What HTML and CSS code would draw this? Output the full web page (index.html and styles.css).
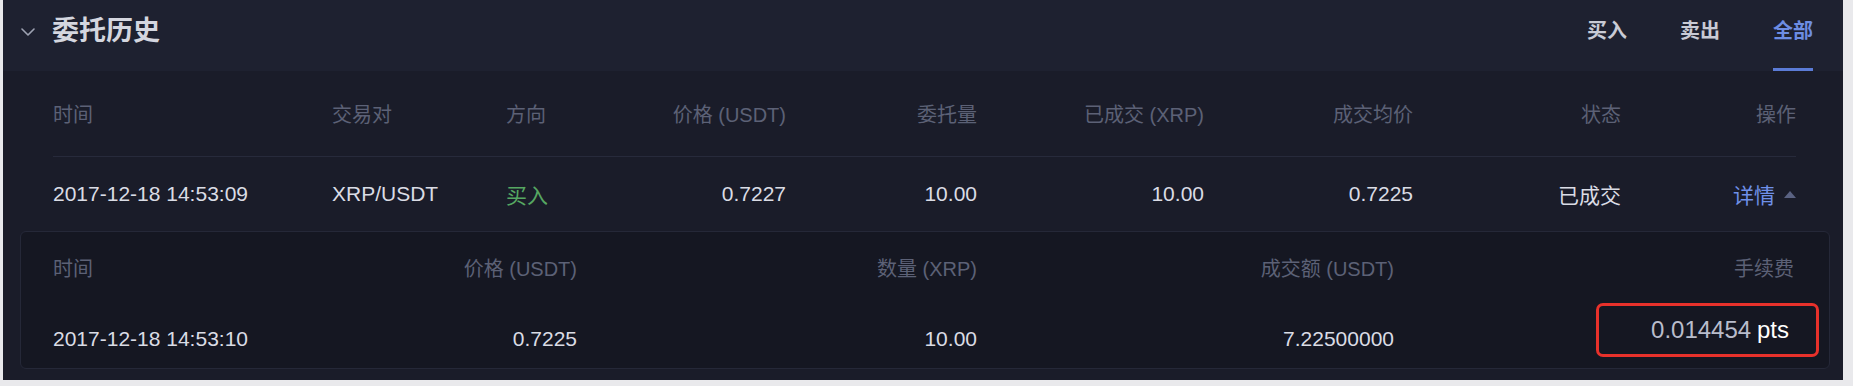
FILE: index.html
```html
<!DOCTYPE html>
<html lang="zh-CN">
<head>
<meta charset="utf-8">
<title>委托历史</title>
<link rel="stylesheet" href="styles.css">
</head>
<body>
<div class="panel">
  <div class="head">
    <div class="head-left">
      <svg class="chev" width="14" height="8" viewBox="0 0 14 8"><path d="M1 1 L7 7 L13 1" fill="none" stroke="#9ea2b2" stroke-width="1.6" stroke-linecap="round" stroke-linejoin="round"/></svg>
      <h2 class="title">委托历史</h2>
    </div>
    <nav class="tabs">
      <span class="tab">买入</span>
      <span class="tab">卖出</span>
      <span class="tab active">全部</span>
    </nav>
  </div>

  <div class="table">
    <div class="row thead">
      <span>时间</span>
      <span>交易对</span>
      <span>方向</span>
      <span class="r">价格 (USDT)</span>
      <span class="r">委托量</span>
      <span class="r">已成交 (XRP)</span>
      <span class="r">成交均价</span>
      <span class="r">状态</span>
      <span class="r">操作</span>
    </div>
    <div class="row tbody">
      <span>2017-12-18 14:53:09</span>
      <span>XRP/USDT</span>
      <span class="buy">买入</span>
      <span class="r">0.7227</span>
      <span class="r">10.00</span>
      <span class="r">10.00</span>
      <span class="r">0.7225</span>
      <span class="r">已成交</span>
      <span class="r op"><span class="link">详情</span><svg class="tri" width="12" height="7" viewBox="0 0 12 7"><polygon points="0,7 6,0 12,7" fill="#5a6282"/></svg></span>
    </div>
  </div>

  <div class="detail">
    <div class="drow dhead">
      <span>时间</span>
      <span class="r">价格 (USDT)</span>
      <span class="r">数量 (XRP)</span>
      <span class="r">成交额 (USDT)</span>
      <span class="r">手续费</span>
    </div>
    <div class="drow dbody">
      <span>2017-12-18 14:53:10</span>
      <span class="r">0.7225</span>
      <span class="r">10.00</span>
      <span class="r">7.22500000</span>
      <span class="r fee-cell"><span class="fee"><span class="fee-num">0.014454</span> <span class="pts">pts</span></span></span>
    </div>
  </div>
</div>
</body>
</html>
```

FILE: styles.css
```css
html, body {
  margin: 0;
  padding: 0;
}

body {
  background: #e9e9ec;
  font-family: "Liberation Sans", "Noto Sans CJK SC", sans-serif;
  width: 1853px;
  height: 386px;
  overflow: hidden;
}

.panel {
  margin-left: 3px;
  width: 1840px;
  height: 380px;
  background: #1a1c29;
  color: #d8dae3;
}

.head {
  height: 71px;
  box-sizing: border-box;
  background: #1e2130;
  display: flex;
  justify-content: space-between;
  align-items: stretch;
  padding: 0 30px 0 18px;
}

.head-left {
  display: flex;
  align-items: center;
  gap: 17px;
  padding-bottom: 8px;
}

.chev {
  display: block;
}

.title {
  margin: 0;
  font-size: 27px;
  font-weight: 700;
  line-height: 1;
  color: #d4d6df;
}

.tabs {
  display: flex;
  gap: 53px;
}

.tab {
  display: flex;
  align-items: center;
  font-size: 20px;
  font-weight: 700;
  color: #c9cbd5;
  padding-bottom: 10px;
  border-bottom: 3px solid transparent;
}

.tab.active {
  color: #6d8de3;
  border-bottom-color: #5b7bd6;
}

.table {
  padding: 0 47px 0 50px;
}

.row {
  display: grid;
  grid-template-columns: 279px 174px 140px 140px 191px 227px 209px 208px 175px;
  align-items: center;
  font-size: 20px;
}

.thead {
  height: 86px;
  box-sizing: border-box;
  border-bottom: 1px solid #272a3b;
  color: #5c6176;
}

.tbody {
  height: 73px;
  font-size: 21px;
  color: #dadce5;
}

.r {
  text-align: right;
}

.buy {
  color: #56a762;
}

.op {
  display: flex;
  justify-content: flex-end;
  align-items: center;
  gap: 9px;
}

.link {
  color: #6f90e8;
}

.tri {
  display: block;
  margin-top: 2px;
}

.detail {
  margin: 1px 13px 0 17px;
  height: 138px;
  box-sizing: border-box;
  border: 1px solid #252838;
  border-radius: 6px;
  background: #151722;
  padding: 0 35px 0 32px;
}

.drow {
  display: grid;
  grid-template-columns: 324px 200px 400px 417px 400px;
  align-items: center;
  font-size: 20px;
}

.dhead {
  height: 71px;
  color: #5c6176;
}

.dbody {
  height: 65px;
  font-size: 21px;
  color: #dadce5;
}

.fee-cell {
  display: flex;
  justify-content: flex-end;
}

.fee {
  display: inline-block;
  border: 3px solid #e8312b;
  border-radius: 7px;
  padding: 11px 27px 11px 52px;
  margin-right: -25px;
  margin-bottom: 17px;
  line-height: 25px;
  white-space: nowrap;
}

.fee-num {
  font-size: 24px;
  color: #b9bdcc;
}

.pts {
  font-size: 24px;
  color: #ffffff;
}
```
